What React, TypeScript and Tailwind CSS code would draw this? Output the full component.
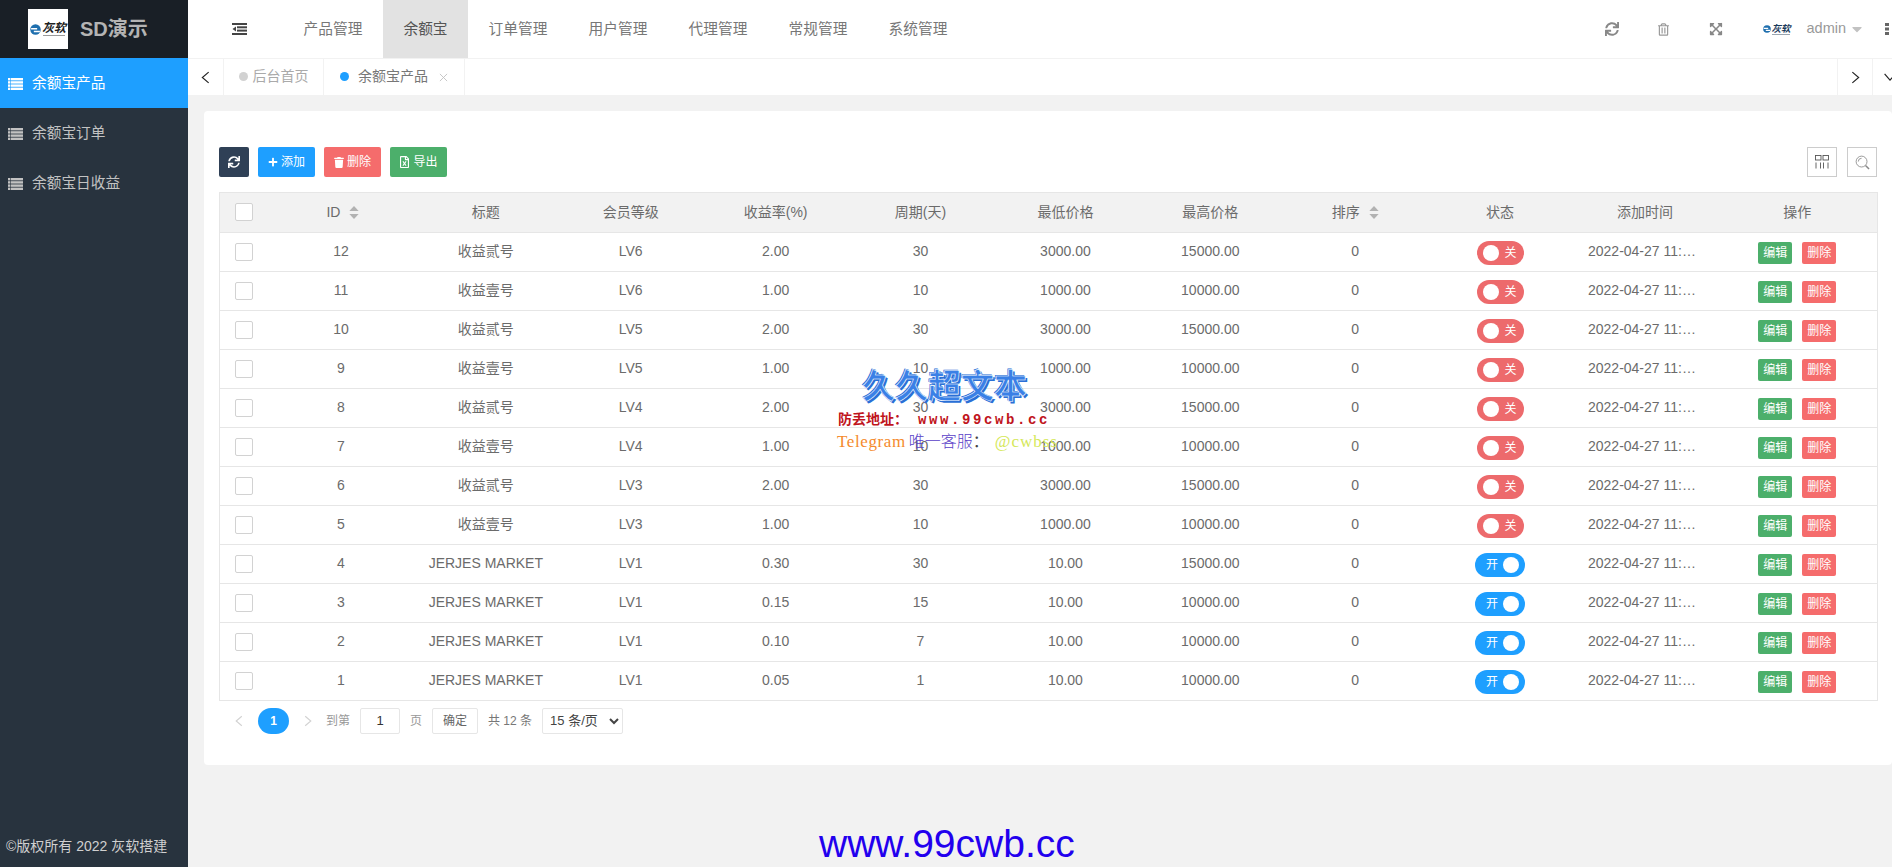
import React from "react";
import { FaSync, FaPlus, FaTrash, FaRegFileExcel, FaRegTrashAlt, FaExpandArrowsAlt, FaCaretDown } from "react-icons/fa";

const FONT = "font-['Liberation_Sans','Noto_Sans_CJK_SC',sans-serif]";

function ListIcon({ className }: { className?: string }) {
  return (
    <svg viewBox="0 0 15 12" className={className} fill="currentColor">
      <rect x="0" y="0" width="2.4" height="2.4" /><rect x="3" y="0" width="12" height="2.4" />
      <rect x="0" y="3.2" width="2.4" height="2.4" /><rect x="3" y="3.2" width="12" height="2.4" />
      <rect x="0" y="6.4" width="2.4" height="2.4" /><rect x="3" y="6.4" width="12" height="2.4" />
      <rect x="0" y="9.6" width="2.4" height="2.4" /><rect x="3" y="9.6" width="12" height="2.4" />
    </svg>
  );
}

function Logo({ small }: { small?: boolean }) {
  return (
    <div className="flex items-center gap-[1px]">
      <svg viewBox="0 0 20 20" className={small ? "w-[8px] h-[8px] shrink-0" : "w-[11px] h-[11px] shrink-0"}>
        <circle cx="10" cy="10" r="9.5" fill="#1f6fae" />
        <path d="M2 8.5 H13 M7 13.5 H18" stroke="#fff" strokeWidth="2.8" />
      </svg>
      <div className="flex flex-col items-center">
        <span className={small ? "text-[9.5px] leading-[10px] italic font-bold text-[#1b3a5c] whitespace-nowrap" : "text-[12px] leading-[12px] italic font-bold text-[#222] whitespace-nowrap"}>灰软</span>
        <span className={small ? "w-[18px] h-[1px] bg-[#9aa5b0]" : "w-[22px] h-[1px] mt-[1px] bg-[#9a9a9a]"} />
      </div>
    </div>
  );
}

function Sort() {
  return (
    <svg viewBox="0 0 10 14" className="w-[10px] h-[13px] inline-block ml-[9px] align-[-2px]" fill="#b2b2b2">
      <path d="M5 0 L10 5.5 H0Z" /><path d="M5 14 L10 8.5 H0Z" />
    </svg>
  );
}

function Check() {
  return <div className="w-[18px] h-[18px] border border-[#d2d2d2] rounded-[2px] bg-white mx-auto" />;
}

const rows: [number, string, string, string, string, string, string, boolean][] = [
  [12, "收益贰号", "LV6", "2.00", "30", "3000.00", "15000.00", false],
  [11, "收益壹号", "LV6", "1.00", "10", "1000.00", "10000.00", false],
  [10, "收益贰号", "LV5", "2.00", "30", "3000.00", "15000.00", false],
  [9, "收益壹号", "LV5", "1.00", "10", "1000.00", "10000.00", false],
  [8, "收益贰号", "LV4", "2.00", "30", "3000.00", "15000.00", false],
  [7, "收益壹号", "LV4", "1.00", "10", "1000.00", "10000.00", false],
  [6, "收益贰号", "LV3", "2.00", "30", "3000.00", "15000.00", false],
  [5, "收益壹号", "LV3", "1.00", "10", "1000.00", "10000.00", false],
  [4, "JERJES MARKET", "LV1", "0.30", "30", "10.00", "15000.00", true],
  [3, "JERJES MARKET", "LV1", "0.15", "15", "10.00", "10000.00", true],
  [2, "JERJES MARKET", "LV1", "0.10", "7", "10.00", "10000.00", true],
  [1, "JERJES MARKET", "LV1", "0.05", "1", "10.00", "10000.00", true],
];

const heads = ["标题", "会员等级", "收益率(%)", "周期(天)", "最低价格", "最高价格"];

function Switch({ on }: { on: boolean }) {
  return on ? (
    <div className="w-[50px] h-[24px] rounded-full bg-[#1e9fff] mx-auto flex items-center justify-between pl-[11px] pr-[6px] text-white text-[12px]">
      <span>开</span><span className="w-[16px] h-[16px] rounded-full bg-white" />
    </div>
  ) : (
    <div className="w-[47px] h-[24px] rounded-full bg-[#ed6a6c] mx-auto flex items-center justify-between pl-[6px] pr-[7px] text-white text-[12px]">
      <span className="w-[16px] h-[16px] rounded-full bg-white" /><span>关</span>
    </div>
  );
}

export default function App() {
  return (
    <div className={`${FONT} h-[867px] w-[1892px] overflow-hidden flex bg-[#f2f2f2] text-[#666] relative`}>
      <aside className="w-[188px] shrink-0 bg-[#28333e] flex flex-col text-[14.7px]">
        <div className="h-[58px] bg-[#191f26] flex items-center pl-[28px] gap-[12px]">
          <div className="w-[40px] h-[40px] bg-white flex items-center justify-center"><Logo /></div>
          <span className="text-[20px] font-bold text-[#b4b4b4]">SD演示</span>
        </div>
        <div className="h-[50px] pt-[1px] bg-[#1e9fff] text-white flex items-center pl-[8px] gap-[9px]"><ListIcon className="w-[15px] h-[12px]" />余额宝产品</div>
        <div className="h-[50px] pt-[1px] text-[#c2c2c2] flex items-center pl-[8px] gap-[9px]"><ListIcon className="w-[15px] h-[12px]" />余额宝订单</div>
        <div className="h-[50px] pt-[1px] text-[#c2c2c2] flex items-center pl-[8px] gap-[9px]"><ListIcon className="w-[15px] h-[12px]" />余额宝日收益</div>
        <div className="mt-auto h-[31px] pl-[6px] text-[14px] text-[#d0d0d0] whitespace-nowrap">©版权所有 2022 灰软搭建</div>
      </aside>
      <main className="flex-1 min-w-0 flex flex-col">
        <header className="h-[59px] bg-white flex items-center border-b border-[#f2f2f2] text-[14.7px] text-[#777]">
          <div className="w-[95px] pl-[44px]">
            <svg viewBox="0 0 15 12" className="w-[15px] h-[12px]" fill="#444">
              <rect x="0" y="0" width="15" height="2" /><rect x="5" y="3.3" width="10" height="2" /><rect x="5" y="6.6" width="10" height="2" /><rect x="0" y="10" width="15" height="2" /><path d="M4 3.5 V8.5 L0.5 6Z" />
            </svg>
          </div>
          {["产品管理", "余额宝", "订单管理", "用户管理", "代理管理", "常规管理", "系统管理"].map((t, i) => (
            <div key={t} className={i === 1 ? "h-[58px] w-[85px] bg-[#e2e2e2] text-[#555] flex items-center justify-center" : "h-[58px] w-[100px] flex items-center justify-center"}>{t}</div>
          ))}
          <div className="ml-auto flex items-center text-[#888]">
            <FaSync className="w-[14px] h-[14px] mr-[39px]" />
            <FaRegTrashAlt className="w-[11px] h-[13px] mr-[40px] text-[#999]" />
            <FaExpandArrowsAlt className="w-[14px] h-[14px] mr-[40px]" />
            <div className="w-[43px]"><Logo small /></div>
            <span className="text-[#999] text-[14.5px] ml-[1px]">admin</span>
            <FaCaretDown className="w-[16px] h-[16px] ml-[3px] text-[#c2c2c2]" />
            <svg viewBox="0 0 4 12" className="w-[4px] h-[12px] ml-[20px] mr-[3px]" fill="#666">
              <rect x="0" y="0" width="4" height="3" /><rect x="0" y="4.5" width="4" height="3" /><rect x="0" y="9" width="4" height="3" />
            </svg>
          </div>
        </header>
        <div className="h-[36px] bg-white flex items-center text-[14px] shrink-0">
          <div className="w-[36px] h-full flex items-center justify-center border-r border-[#f2f2f2]">
            <svg viewBox="0 0 10 14" className="w-[9px] h-[13px]" fill="none" stroke="#222" strokeWidth="1.3"><path d="M8.5 1 L1.5 7 L8.5 13" /></svg>
          </div>
          <div className="w-[100px] h-full flex items-center justify-center gap-[5px] border-r border-[#f2f2f2] text-[#aaa] pb-[1px]">
            <span className="w-[9px] h-[9px] rounded-full bg-[#d2d2d2]" />后台首页
          </div>
          <div className="w-[141px] h-full flex items-center pl-[16px] border-r border-[#f2f2f2] text-[#777] pb-[1px]">
            <span className="w-[9px] h-[9px] rounded-full bg-[#1e9fff] mr-[9px]" />余额宝产品
            <svg viewBox="0 0 10 10" className="w-[9px] h-[9px] ml-[11px] mt-[1px]" stroke="#c2c2c2" strokeWidth="1"><path d="M1 1 L9 9 M9 1 L1 9" /></svg>
          </div>
          <div className="ml-auto w-[35px] h-full flex items-center justify-center border-l border-[#f2f2f2]">
            <svg viewBox="0 0 10 14" className="w-[9px] h-[13px]" fill="none" stroke="#222" strokeWidth="1.3"><path d="M1.5 1 L8.5 7 L1.5 13" /></svg>
          </div>
          <div className="w-[20px] h-full flex items-center pl-[10px] border-l border-[#f2f2f2] overflow-hidden">
            <svg viewBox="0 0 14 10" className="w-[14px] h-[9px] shrink-0" fill="none" stroke="#222" strokeWidth="1.3"><path d="M1 1 L7 8 L13 1" /></svg>
          </div>
        </div>
        <div className="flex-1 pl-[16px] pt-[16px]">
          <section className="bg-white rounded-[4px] h-[654px] pl-[15px] pr-[15px] pt-[36px]">
            <div className="flex items-center h-[30px] text-[12px] text-white gap-[9px]">
              <div className="w-[30px] h-[30px] bg-[#2f4056] rounded-[2px] flex items-center justify-center"><FaSync className="w-[12px] h-[12px]" /></div>
              <div className="w-[57px] h-[30px] bg-[#1e9fff] rounded-[2px] flex items-center justify-center gap-[3px]"><FaPlus className="w-[10px] h-[10px]" />添加</div>
              <div className="w-[57px] h-[30px] bg-[#f56c6c] rounded-[2px] flex items-center justify-center gap-[3px]"><FaTrash className="w-[10px] h-[11px]" />删除</div>
              <div className="w-[57px] h-[30px] bg-[#4caf6b] rounded-[2px] flex items-center justify-center gap-[3px]"><FaRegFileExcel className="w-[11px] h-[12px]" />导出</div>
              <div className="ml-auto w-[30px] h-[30px] border border-[#ccc] flex items-center justify-center">
                <svg viewBox="0 0 14 14" className="w-[14px] h-[14px]" fill="none" stroke="#555" strokeWidth="0.9">
                  <rect x="0.5" y="0.5" width="5.5" height="4.5" /><rect x="8" y="0.5" width="5.5" height="4.5" />
                  <path d="M1 7.5 V13.5 M5.5 7.5 V13.5 M8.5 7.5 V13.5 M13 7.5 V13.5" />
                </svg>
              </div>
              <div className="ml-[1px] w-[30px] h-[30px] border border-[#ccc] flex items-center justify-center">
                <svg viewBox="0 0 16 16" className="w-[15px] h-[15px]" fill="none" stroke="#888" strokeWidth="0.9">
                  <circle cx="7" cy="7" r="5.8" /><path d="M3.5 7 A3.5 3.5 0 0 1 7 3.5" /><path d="M11.2 11.2 L15 15" strokeWidth="1.6" />
                </svg>
              </div>
            </div>
            <table className="mt-[15px] w-[1658px] table-fixed border-collapse text-[14px] text-[#6b6b6b] border border-[#e6e6e6] text-center">
              <colgroup>
                <col className="w-[49px]" />
                <col span={10} className="w-[144.9px]" />
                <col className="w-[160px]" />
              </colgroup>
              <thead>
                <tr className="h-[39.5px] bg-[#f2f2f2] border-b border-[#e6e6e6]">
                  <th className="font-normal"><Check /></th>
                  <th className="font-normal pl-[4px]">ID<Sort /></th>
                  {heads.map((h) => <th key={h} className="font-normal">{h}</th>)}
                  <th className="font-normal">排序<Sort /></th>
                  <th className="font-normal">状态</th>
                  <th className="font-normal">添加时间</th>
                  <th className="font-normal">操作</th>
                </tr>
              </thead>
              <tbody>
                {rows.map((r) => (
                  <tr key={r[0]} className="h-[39px] border-b border-[#e6e6e6]">
                    <td><Check /></td>
                    <td>{r[0]}</td>
                    <td>{r[1]}</td>
                    <td>{r[2]}</td>
                    <td>{r[3]}</td>
                    <td>{r[4]}</td>
                    <td>{r[5]}</td>
                    <td>{r[6]}</td>
                    <td>0</td>
                    <td><div className="pt-[3px]"><Switch on={r[7]} /></div></td>
                    <td className="whitespace-nowrap pr-[6px]">2022-04-27 11:…</td>
                    <td>
                      <div className="flex justify-center gap-[10px] pt-[3px] text-[12px] text-white">
                        <span className="w-[34px] h-[22px] bg-[#4caf6b] rounded-[2px] flex items-center justify-center">编辑</span>
                        <span className="w-[34px] h-[22px] bg-[#f56c6c] rounded-[2px] flex items-center justify-center">删除</span>
                      </div>
                    </td>
                  </tr>
                ))}
              </tbody>
            </table>
            <div className="flex items-center h-[26px] mt-[7px] ml-[16px] text-[12px] text-[#999]">
              <svg viewBox="0 0 10 14" className="w-[8px] h-[12px]" fill="none" stroke="#d2d2d2" strokeWidth="1.4"><path d="M8.5 1 L1.5 7 L8.5 13" /></svg>
              <span className="ml-[15px] w-[31px] h-[26px] rounded-full bg-[#1e9fff] text-white flex items-center justify-center font-bold">1</span>
              <svg viewBox="0 0 10 14" className="ml-[15px] w-[8px] h-[12px]" fill="none" stroke="#d2d2d2" strokeWidth="1.4"><path d="M1.5 1 L8.5 7 L1.5 13" /></svg>
              <span className="ml-[14px]">到第</span>
              <span className="ml-[10px] w-[40px] h-[26px] border border-[#e6e6e6] rounded-[2px] flex items-center justify-center text-[#333] text-[13px]">1</span>
              <span className="ml-[10px]">页</span>
              <span className="ml-[10px] w-[46px] h-[26px] border border-[#e6e6e6] rounded-[2px] flex items-center justify-center text-[#666]">确定</span>
              <span className="ml-[10px] text-[#777]">共 12 条</span>
              <select defaultValue="15" className="ml-[10px] w-[81px] h-[26px] border border-[#e6e6e6] rounded-[2px] pl-[3px] bg-white text-[#444] text-[13px]">
                <option value="15">15 条/页</option>
              </select>
            </div>
          </section>
        </div>
      </main>
      <div className="absolute left-[819px] top-[824px] text-[39px] leading-[40px] text-[#2200ee] whitespace-nowrap">www.99cwb.cc</div>
      <div className="absolute left-[862px] top-[366px] text-[33px] leading-[42px] font-bold text-[#3a80e6] whitespace-nowrap [-webkit-text-stroke:0.6px_#ffffff] [text-shadow:2px_2px_0_#2a6fd6,-1px_-1px_0_#2a6fd6]">久久超文本</div>
      <div className="absolute left-[838px] top-[409px] text-[14px] leading-[20px] font-bold text-[#c0141c] whitespace-nowrap">防丢地址：<span className="ml-[10px] tracking-[2.6px] font-['Liberation_Mono',monospace]">www.99cwb.cc</span></div>
      <div className="absolute left-[837px] top-[432px] text-[16px] leading-[20px] whitespace-nowrap font-['Liberation_Serif','Noto_Sans_CJK_SC',serif]">
        <span className="text-[#f58a2c] text-[17px] tracking-[0.6px]">Telegram</span><span className="text-[#5a3fc8] ml-[3px] font-light">唯一客服</span><span className="text-[#444]">：</span><span className="text-[#d5e85a] text-[17px] tracking-[1px] ml-[6px]">@cwbss</span>
      </div>
    </div>
  );
}
